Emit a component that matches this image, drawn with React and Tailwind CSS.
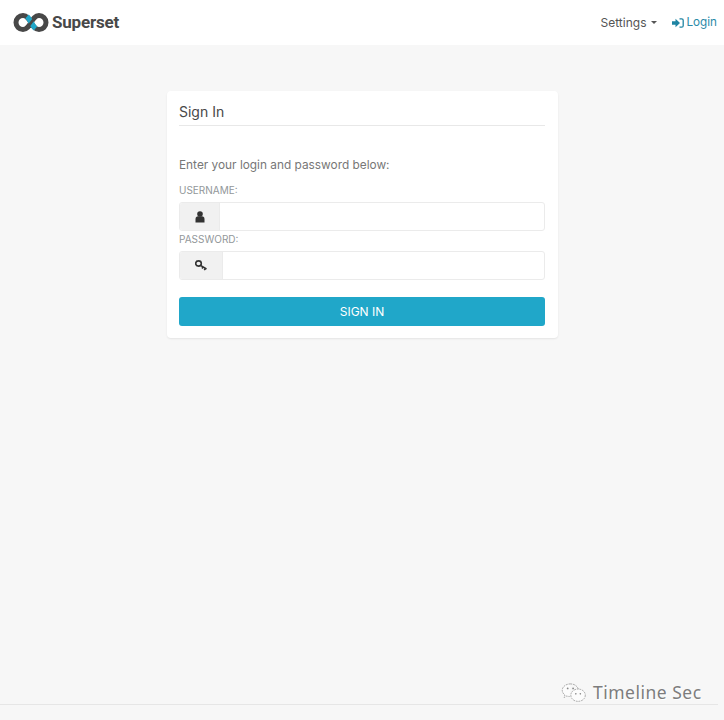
import React from "react";

function Logo() {
  return (
    <svg width="36" height="19" viewBox="0 0 36 19" className="block">
      <path d="M10 2.500a7 7 0 1 0 0 14C14 16.500 16 13 18 9.500C20 6 22 2.500 26 2.500a7 7 0 1 1 0 14C22 16.500 20 13 18 9.500C16 6 14 2.500 10 2.500z" fill="none" stroke="#484848" strokeWidth="5" />
      <path d="M14 3.500C15.800 5 17 7.300 18.200 9.500C19.400 11.700 20.600 14 22.500 15.500" fill="none" stroke="#20a7c9" strokeWidth="5.400" />
      <path d="M13 15.500C15 14 16.500 12 18.200 9.500C19.900 7 21.500 5 23.500 3.500" fill="none" stroke="#484848" strokeWidth="2.800" />
    </svg>
  );
}

function UserIcon() {
  return (
    <svg width="10" height="12" viewBox="0 0 10 12" className="block">
      <circle cx="5" cy="3" r="2.800" fill="#333" />
      <path d="M0.500 11.500V8C0.500 6.300 1.700 5.300 3 5.300h4C8.300 5.300 9.500 6.300 9.500 8v3.500z" fill="#333" />
    </svg>
  );
}

function KeyIcon() {
  return (
    <svg width="12" height="11" viewBox="0 0 12 11" className="block">
      <ellipse cx="3.500" cy="3.500" rx="2.800" ry="2.600" fill="none" stroke="#333" strokeWidth="1.600" />
      <path d="M5.500 5.300l6 3.700M8 6.800l-1 1.700M10.300 8.300l-1 1.800" fill="none" stroke="#333" strokeWidth="1.500" />
    </svg>
  );
}

function LoginIcon() {
  return (
    <svg width="12" height="10" viewBox="0 0 12 10" className="block">
      <path d="M0 3.300h3.500V0.800L8 5l-4.500 4.200V6.700H0z" fill="#1f84a3" />
      <path d="M7.500 0.800h2.200c.9 0 1.500.6 1.500 1.500v5.400c0 .9-.6 1.500-1.500 1.500H7.500" fill="none" stroke="#1f84a3" strokeWidth="1.300" />
    </svg>
  );
}

function WeChat() {
  return (
    <svg width="26" height="19" viewBox="0 0 28 21" className="block">
      <path d="M10 1C5 1 1 4.200 1 8c0 2.200 1.200 4 3 5.300L3 16l3-1.600c1 .3 2 .5 3.200.5" fill="#fcfcfc" stroke="#a0a0a0" strokeWidth="1" strokeDasharray="2 1" />
      <path d="M10 1c4.500 0 8 2.500 8.800 6" fill="none" stroke="#a0a0a0" strokeWidth="1" strokeDasharray="2 1" />
      <ellipse cx="18.500" cy="13.500" rx="8" ry="6.800" fill="#fcfcfc" stroke="#a0a0a0" strokeWidth="1" strokeDasharray="2 1" />
      <circle cx="7" cy="6" r="1" fill="#888" />
      <circle cx="13" cy="6" r="1" fill="#888" />
      <circle cx="16" cy="12" r="0.900" fill="#888" />
      <circle cx="21" cy="12" r="0.900" fill="#888" />
    </svg>
  );
}

function Field({ label, addonClass, icon }) {
  return (
    <div>
      <div className="text-[10px] leading-[15px] text-[#92979a] uppercase">{label}</div>
      <div className="mt-[4px] flex h-[29px] rounded-[3px] border border-[#ebebeb] bg-white overflow-hidden">
        <div className={`${addonClass} flex items-center justify-center bg-[#f1f1f1] border-r border-[#ebebeb]`}>
          {icon}
        </div>
        <div className="flex-1" />
      </div>
    </div>
  );
}

export default function App() {
  return (
    <div className="relative h-[720px] w-[724px] overflow-hidden bg-[#f7f7f7] font-['Inter',sans-serif]">
      <nav className="flex h-[45px] items-center justify-between bg-white pl-[13px] pr-[7px]">
        <div className="flex items-center gap-[3px]">
          <Logo />
          <span className="font-['Roboto',sans-serif] text-[17px] font-bold tracking-[-0.200px] text-[#484848]">Superset</span>
        </div>
        <div className="flex items-center text-[12px]">
          <span className="text-[#555]">Settings</span>
          <span className="ml-[5px] h-0 w-0 border-x-[3px] border-t-[3px] border-x-transparent border-t-[#555]" />
          <span className="ml-[15px]"><LoginIcon /></span>
          <span className="ml-[2px] text-[11.700px] text-[#2b8aa8]">Login</span>
        </div>
      </nav>

      <main className="flex justify-center pt-[46px]">
        <section className="h-[247px] w-[391px] rounded-[4px] bg-white px-[12.500px] pt-[11px] shadow-[0_1px_2px_rgba(0,0,0,0.08)]">
          <h1 className="h-[24px] border-b border-[#e8e8e8] pb-[4px] text-[14px] leading-[19px] text-[#484848]">Sign In</h1>
          <p className="mt-[31px] text-[11.850px] leading-[16px] text-[#777]">Enter your login and password below:</p>
          <div className="mt-[10px] flex flex-col gap-[1px]">
            <Field label="Username:" addonClass="w-[40px]" icon={<UserIcon />} />
            <Field label="Password:" addonClass="w-[43px]" icon={<KeyIcon />} />
          </div>
          <button className="mt-[17px] flex h-[29px] w-full items-center justify-center rounded-[3px] bg-[#20a7c9] text-[12px] text-white">SIGN IN</button>
        </section>
      </main>

      <div className="absolute bottom-[15px] left-0 h-px w-[718px] bg-[#e6e6e6]" />
      <div className="absolute left-[561px] top-[679px] flex items-center gap-[6px]">
        <WeChat />
        <span className="font-['Noto_Sans',sans-serif] text-[17.500px] tracking-[0.500px] text-[#7d7d7d] [text-shadow:1px_1px_0_#fff]">Timeline Sec</span>
      </div>
    </div>
  );
}
